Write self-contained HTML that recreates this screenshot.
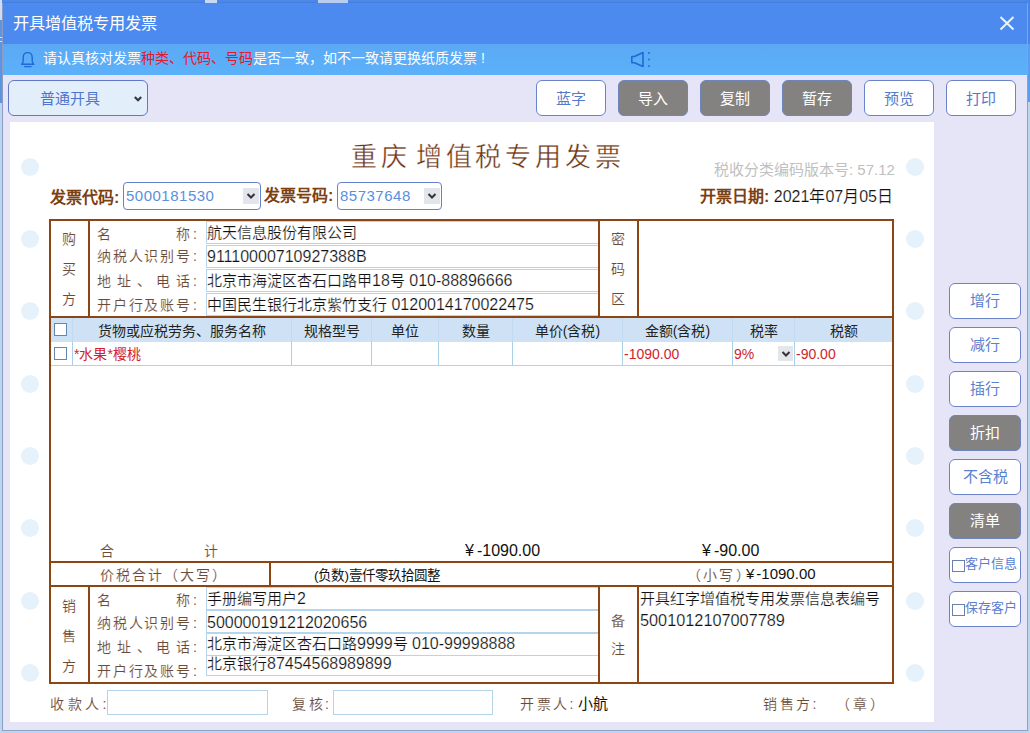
<!DOCTYPE html>
<html lang="zh-CN">
<head>
<meta charset="utf-8">
<style>
*{box-sizing:border-box;margin:0;padding:0}
html,body{width:1030px;height:733px;overflow:hidden}
body{position:relative;background:#bcd6f0;font-family:"Liberation Sans",sans-serif;}
.a{position:absolute;white-space:nowrap}
#win{left:3px;top:3px;width:1024px;height:727px;background:#e5e5f7;}
#title{left:3px;top:3px;width:1024px;height:41px;background:#4d8af0;}
#title .t{left:9.5px;top:9.5px;font-size:16.2px;line-height:20px;color:#fff}
#notice{left:3px;top:44px;width:1024px;height:31px;background:linear-gradient(#5ba9f5,#5bb1f9);}
#notice .t{left:40px;top:5px;font-size:14px;line-height:18px;color:#fff}
.red{color:#e31a2a}
.btn{position:absolute;width:70px;height:36px;border:1.5px solid #6b84c9;border-radius:6px;background:#fff;color:#5679c8;font-size:15px;line-height:35px;text-align:center;}
.btn.g{background:#838280;color:#fff;border-color:#6c86bd}
.rbtn{position:absolute;left:949px;width:72px;height:36px;border:1.5px solid #6b84c9;border-radius:6px;background:#fff;color:#5a80d0;font-size:15px;line-height:34px;text-align:center;}
.rbtn.g{background:#838280;color:#fff;border-color:#6c86bd}
#paper{left:10px;top:122px;width:924px;height:600px;background:#fff;}
.dot{position:absolute;width:18px;height:18px;border-radius:50%;background:#e5f2fb}
.bl{position:absolute;background:#8c4614}
.lbl{position:absolute;width:93px;display:flex;justify-content:space-between;font-size:14px;line-height:16px;color:#6b4a36;-webkit-text-stroke:0.12px #fff}
.lbl2{position:absolute;font-size:14px;line-height:16px;color:#6b4a36;-webkit-text-stroke:0.12px #fff;white-space:nowrap}
.val{position:absolute;left:206px;width:392px;border:1px solid #b6d4ea;border-right:0;font-size:16px;color:#111;-webkit-text-stroke:0.2px #fff;line-height:20px;white-space:nowrap;overflow:hidden;padding-left:0}
.vch{position:absolute;font-size:14px;line-height:16px;color:#6b4a36;-webkit-text-stroke:0.12px #fff}
.hdr{position:absolute;top:318px;height:24px;background:#cfe2f5;font-size:14px;color:#222;line-height:26px;text-align:center;border-right:1px solid #c2daee}
.cell{position:absolute;top:342px;height:24px;border-right:1px solid #a9d0e8;border-bottom:1px solid #b0d2ea;font-size:14px;line-height:24px;color:#d01e2e;white-space:nowrap}
.c{font-size:15px}
.cb{position:absolute;width:13px;height:12px;border:1px solid #6288b0;background:#fff}
</style>
</head>
<body>
<div class="a" style="left:0;top:0;width:1030px;height:3px;background:#4d88e8"></div>
<div class="a" style="left:0;top:2px;width:1030px;height:1px;background:#4380dd"></div>
<div class="a" style="left:2px;top:3px;width:1px;height:728px;background:#8a9cc4"></div>
<div class="a" style="left:1027px;top:3px;width:1px;height:728px;background:#8ea2c8"></div>
<div class="a" style="left:2px;top:730px;width:1026px;height:1px;background:#8ea2c8"></div>
<div class="a" style="left:0;top:3px;width:2px;height:100px;background:#5b95e2"></div>
<div class="a" style="left:0;top:0;width:2px;height:20px;background:#cfdcf6"></div>
<div class="a" style="left:0;top:37px;width:2px;height:1px;background:#d8e6fa"></div>
<div class="a" style="left:0;top:41px;width:2px;height:1px;background:#d8e6fa"></div>
<div class="a" style="left:1028px;top:0;width:2px;height:44px;background:#4a84e6"></div>
<div class="a" style="left:1028px;top:44px;width:2px;height:58px;background:#5a9cee"></div>
<div id="win" class="a"></div>
<div id="title" class="a"><div class="a t">开具增值税专用发票</div><svg class="a" style="left:996px;top:13px" width="18" height="18" viewBox="0 0 18 18"><path d="M1.5 1 L14.5 13.5 M14.5 1 L1.5 13.5" stroke="#eaf4ff" stroke-width="2" fill="none"/></svg></div>
<div id="notice" class="a"><svg class="a" style="left:17px;top:7px" width="16" height="18" viewBox="0 0 16 18"><path d="M1.6 13.3 C2.9 12.4 3.2 11 3.2 9.5 L3.2 6.5 Q3.2 1.6 7.7 1.6 Q12.2 1.6 12.2 6.5 L12.2 9.5 C12.2 11 12.5 12.4 13.8 13.3 Z" stroke="#1c6bd6" stroke-width="1.4" fill="none" stroke-linejoin="round"/><path d="M4.2 15.6 L11.6 15.6" stroke="#1c6bd6" stroke-width="1.3"/></svg><div class="a t">请认真核对发票<span class="red">种类、代码、号码</span>是否一致，如不一致请更换纸质发票<span style="display:inline-block;width:4px"></span>!</div><svg class="a" style="left:627px;top:7px" width="24" height="18" viewBox="0 0 24 18"><path d="M1.8 5.5 L4.5 5.5 L13 1.5 L13 15.5 L4.5 11.8 L1.8 11.8 Z" stroke="#1c6bd6" stroke-width="1.6" fill="none" stroke-linejoin="round"/><circle cx="19" cy="2" r="0.9" fill="#1c6bd6"/><circle cx="19" cy="8.5" r="0.9" fill="#1c6bd6"/><circle cx="19" cy="15" r="0.9" fill="#1c6bd6"/></svg></div>
<div class="a" style="left:205px;top:0;width:12px;height:3px;background:#c9d9f3"></div>
<div class="a" style="left:318px;top:0;width:30px;height:3px;background:#b8cdf0"></div>
<div class="a" style="left:8px;top:80px;width:140px;height:36px;border:1.2px solid #6078c8;border-radius:6px;background:#e3eefb;"></div>
<div class="a" style="left:40px;top:90px;font-size:15px;line-height:18px;color:#4e76cc">普通开具</div>
<svg class="a" style="left:132px;top:94px" width="12" height="10" viewBox="0 0 12 10"><path d="M2.8 3 L6 6.2 L9.2 3" stroke="#38383e" stroke-width="2.2" fill="none"/></svg>
<div class="btn" style="left:536px;top:80px">蓝字</div>
<div class="btn g" style="left:618px;top:80px">导入</div>
<div class="btn g" style="left:700px;top:80px">复制</div>
<div class="btn g" style="left:782px;top:80px">暂存</div>
<div class="btn" style="left:864px;top:80px">预览</div>
<div class="btn" style="left:946px;top:80px">打印</div>
<div class="rbtn" style="top:283px">增行</div>
<div class="rbtn" style="top:327px">减行</div>
<div class="rbtn" style="top:371px">插行</div>
<div class="rbtn g" style="top:415px">折扣</div>
<div class="rbtn" style="top:459px">不含税</div>
<div class="rbtn g" style="top:503px">清单</div>
<div class="rbtn" style="top:547px"></div>
<div class="a" style="left:952px;top:560px;width:13px;height:12px;border:1px solid #6a80aa;background:#fff"></div>
<div class="a" style="left:965px;top:556px;font-size:13px;line-height:16px;color:#5a80d0">客户信息</div>
<div class="rbtn" style="top:591px"></div>
<div class="a" style="left:952px;top:604px;width:13px;height:12px;border:1px solid #6a80aa;background:#fff"></div>
<div class="a" style="left:965px;top:600px;font-size:13px;line-height:16px;color:#5a80d0">保存客户</div>
<div id="paper" class="a"></div>
<div class="dot" style="left:20.5px;top:157.8px"></div>
<div class="dot" style="left:905.5px;top:157.8px"></div>
<div class="dot" style="left:20.5px;top:230.10000000000002px"></div>
<div class="dot" style="left:905.5px;top:230.10000000000002px"></div>
<div class="dot" style="left:20.5px;top:302.4px"></div>
<div class="dot" style="left:905.5px;top:302.4px"></div>
<div class="dot" style="left:20.5px;top:374.7px"></div>
<div class="dot" style="left:905.5px;top:374.7px"></div>
<div class="dot" style="left:20.5px;top:447.0px"></div>
<div class="dot" style="left:905.5px;top:447.0px"></div>
<div class="dot" style="left:20.5px;top:519.3px"></div>
<div class="dot" style="left:905.5px;top:519.3px"></div>
<div class="dot" style="left:20.5px;top:591.5999999999999px"></div>
<div class="dot" style="left:905.5px;top:591.5999999999999px"></div>
<div class="dot" style="left:20.5px;top:663.9px"></div>
<div class="dot" style="left:905.5px;top:663.9px"></div>
<div class="a" style="left:351px;top:139px;font-size:26px;line-height:36px;letter-spacing:3.85px;color:#6e3412;-webkit-text-stroke:0.35px #fff">重庆<span style="display:inline-block;width:5px"></span>增值税专用发票</div>
<div class="a" style="left:714px;top:161px;font-size:15px;line-height:18px;color:#c0c0c0">税收分类编码版本号: 57.12</div>
<div class="a" style="left:700px;top:187px;font-size:16px;line-height:20px;color:#111"><b style="color:#7b3f12">开票日期:</b> <span style="-webkit-text-stroke:0.15px #fff">2021年07月05日</span></div>
<div class="a" style="left:50px;top:188px;font-size:16px;line-height:20px;color:#7b3f12;font-weight:bold">发票代码:</div>
<div class="a" style="left:123px;top:182px;width:138px;height:28px;border:1px solid #6680cc;border-radius:4px;background:#fff"></div>
<div class="a" style="left:126px;top:186px;font-size:15px;letter-spacing:0.5px;line-height:20px;color:#5a90dc">5000181530</div>
<div class="a" style="left:243px;top:188px;width:16px;height:16px;background:#e2e6ec"></div>
<svg class="a" style="left:245px;top:191px" width="12" height="10" viewBox="0 0 12 10"><path d="M2.5 3 L6 6.5 L9.5 3" stroke="#333" stroke-width="2" fill="none"/></svg>
<div class="a" style="left:264px;top:186px;font-size:16px;line-height:20px;color:#7b3f12;font-weight:bold">发票号码:</div>
<div class="a" style="left:337px;top:182px;width:105px;height:28px;border:1px solid #6680cc;border-radius:4px;background:#fff"></div>
<div class="a" style="left:340px;top:186px;font-size:15px;letter-spacing:0.5px;line-height:20px;color:#5a90dc">85737648</div>
<div class="a" style="left:424px;top:188px;width:16px;height:16px;background:#e2e6ec"></div>
<svg class="a" style="left:426px;top:191px" width="12" height="10" viewBox="0 0 12 10"><path d="M2.5 3 L6 6.5 L9.5 3" stroke="#333" stroke-width="2" fill="none"/></svg>
<div class="bl" style="left:49px;top:219px;width:845px;height:2px"></div>
<div class="bl" style="left:49px;top:316px;width:845px;height:2px"></div>
<div class="bl" style="left:49px;top:561px;width:845px;height:2px"></div>
<div class="bl" style="left:49px;top:585px;width:845px;height:2px"></div>
<div class="bl" style="left:49px;top:682px;width:845px;height:2px"></div>
<div class="bl" style="left:49px;top:219px;width:2px;height:465px"></div>
<div class="bl" style="left:892px;top:219px;width:2px;height:465px"></div>
<div class="bl" style="left:88px;top:219px;width:2px;height:99px"></div>
<div class="bl" style="left:598px;top:219px;width:2px;height:99px"></div>
<div class="bl" style="left:637px;top:219px;width:2px;height:99px"></div>
<div class="bl" style="left:269px;top:561px;width:2px;height:26px"></div>
<div class="bl" style="left:88px;top:585px;width:2px;height:99px"></div>
<div class="bl" style="left:598px;top:585px;width:2px;height:99px"></div>
<div class="bl" style="left:637px;top:585px;width:2px;height:99px"></div>
<div class="vch" style="left:62px;top:231px">购</div>
<div class="vch" style="left:62px;top:261px">买</div>
<div class="vch" style="left:62px;top:291px">方</div>
<div class="lbl" style="left:97px;top:226px"><span>名</span><span>称</span></div>
<div class="lbl2" style="left:193px;top:226px">:</div>
<div class="lbl" style="left:97px;top:248px"><span>纳</span><span>税</span><span>人</span><span>识</span><span>别</span><span>号</span></div>
<div class="lbl2" style="left:193px;top:248px">:</div>
<div class="lbl" style="left:97px;top:273px"><span>地</span><span>址</span><span>、</span><span>电</span><span>话</span></div>
<div class="lbl2" style="left:193px;top:273px">:</div>
<div class="lbl" style="left:97px;top:297px"><span>开</span><span>户</span><span>行</span><span>及</span><span>账</span><span>号</span></div>
<div class="lbl2" style="left:193px;top:297px">:</div>
<div class="val" style="top:221px;height:23px;padding-top:1px"><span class="c">航天信息股份有限公司</span></div>
<div class="val" style="top:245px;height:23px;padding-top:1px">91110000710927388B</div>
<div class="val" style="top:269px;height:23px;padding-top:1px"><span class="c">北京市海淀区杏石口路甲</span>18<span class="c">号</span> 010-88896666</div>
<div class="val" style="top:293px;height:23px;padding-top:1px"><span class="c">中国民生银行北京紫竹支行</span> 0120014170022475</div>
<div class="vch" style="left:611px;top:231px">密</div>
<div class="vch" style="left:611px;top:261px">码</div>
<div class="vch" style="left:611px;top:291px">区</div>
<div class="hdr" style="left:51px;width:22px"></div>
<div class="hdr" style="left:73px;width:219px">货物或应税劳务、服务名称</div>
<div class="hdr" style="left:292px;width:80px">规格型号</div>
<div class="hdr" style="left:372px;width:67px">单位</div>
<div class="hdr" style="left:439px;width:74px">数量</div>
<div class="hdr" style="left:513px;width:110px">单价(含税)</div>
<div class="hdr" style="left:623px;width:110px">金额(含税)</div>
<div class="hdr" style="left:733px;width:62px">税率</div>
<div class="hdr" style="left:795px;width:97px;border-right:0">税额</div>
<div class="cb" style="left:54px;top:323px;height:13px"></div>
<div class="cell" style="left:51px;width:22px;padding-left:1px"></div>
<div class="cell" style="left:73px;width:219px;padding-left:1px">*水果*樱桃</div>
<div class="cell" style="left:292px;width:80px;padding-left:1px"></div>
<div class="cell" style="left:372px;width:67px;padding-left:1px"></div>
<div class="cell" style="left:439px;width:74px;padding-left:1px"></div>
<div class="cell" style="left:513px;width:110px;padding-left:1px"></div>
<div class="cell" style="left:623px;width:110px;padding-left:1px">-1090.00</div>
<div class="cell" style="left:733px;width:62px;padding-left:1px">9%</div>
<div class="cell" style="left:795px;width:97px;padding-left:1px;border-right:0">-90.00</div>
<div class="cb" style="left:54px;top:347px;height:13px"></div>
<div class="a" style="left:778px;top:346px;width:15px;height:15px;background:#e3e6ea"></div>
<svg class="a" style="left:779.5px;top:349px" width="12" height="10" viewBox="0 0 12 10"><path d="M2.5 3 L6 6.5 L9.5 3" stroke="#333" stroke-width="2" fill="none"/></svg>
<div class="vch" style="left:100px;top:543px">合</div>
<div class="vch" style="left:204px;top:543px">计</div>
<div class="a" style="left:465px;top:541px;font-size:16px;line-height:20px;color:#111">¥<span style="margin-left:3px">-1090.00</span></div>
<div class="a" style="left:702px;top:541px;font-size:16px;line-height:20px;color:#111">¥<span style="margin-left:3px">-90.00</span></div>
<div class="lbl2" style="left:100px;top:567px;letter-spacing:2px">价税合计（大写）</div>
<div class="a" style="left:314px;top:566px;font-size:13.5px;line-height:20px;color:#111">(负数)壹仟零玖拾圆整</div>
<div class="lbl2" style="left:687px;top:567px;letter-spacing:2.2px">（小写）</div>
<div class="a" style="left:746px;top:564px;font-size:15px;line-height:20px;color:#111">¥<span style="margin-left:2px">-1090.00</span></div>
<div class="vch" style="left:62px;top:598px">销</div>
<div class="vch" style="left:62px;top:628px">售</div>
<div class="vch" style="left:62px;top:658px">方</div>
<div class="lbl" style="left:97px;top:592px"><span>名</span><span>称</span></div>
<div class="lbl2" style="left:193px;top:592px">:</div>
<div class="lbl" style="left:97px;top:615px"><span>纳</span><span>税</span><span>人</span><span>识</span><span>别</span><span>号</span></div>
<div class="lbl2" style="left:193px;top:615px">:</div>
<div class="lbl" style="left:97px;top:639px"><span>地</span><span>址</span><span>、</span><span>电</span><span>话</span></div>
<div class="lbl2" style="left:193px;top:639px">:</div>
<div class="lbl" style="left:97px;top:663px"><span>开</span><span>户</span><span>行</span><span>及</span><span>账</span><span>号</span></div>
<div class="lbl2" style="left:193px;top:663px">:</div>
<div class="val" style="top:587px;height:23px;line-height:20px"><div style="position:relative;top:1px"><span class="c">手册编写用户</span>2</div></div>
<div class="val" style="top:610px;height:23px;line-height:20px"><div style="position:relative;top:2px">500000191212020656</div></div>
<div class="val" style="top:633px;height:23px;line-height:20px"><div style="position:relative;top:0px"><span class="c">北京市海淀区杏石口路</span>9999<span class="c">号</span> 010-99998888</div></div>
<div class="val" style="top:655px;height:21px;line-height:18px"><div style="position:relative;top:-1px"><span class="c">北京银行</span>87454568989899</div></div>
<div class="vch" style="left:611px;top:613px">备</div>
<div class="vch" style="left:611px;top:641px">注</div>
<div class="a" style="left:640px;top:589px;font-size:15px;line-height:20px;color:#111;-webkit-text-stroke:0.2px #fff">开具红字增值税专用发票信息表编号</div>
<div class="a" style="left:640px;top:610px;font-size:16.3px;line-height:20px;color:#111;-webkit-text-stroke:0.2px #fff">5001012107007789</div>
<div class="lbl2" style="left:50px;top:696px;letter-spacing:3.5px">收款人:</div>
<div class="a" style="left:107px;top:690px;width:161px;height:25px;border:1px solid #b4d4e8;background:#fff"></div>
<div class="lbl2" style="left:292px;top:696px;letter-spacing:2.5px">复核:</div>
<div class="a" style="left:333px;top:690px;width:160px;height:25px;border:1px solid #b4d4e8;background:#fff"></div>
<div class="lbl2" style="left:520px;top:696px;letter-spacing:2.5px">开票人:</div>
<div class="a" style="left:578px;top:694px;font-size:15px;line-height:20px;color:#111">小航</div>
<div class="lbl2" style="left:763px;top:696px;letter-spacing:2.5px">销售方:</div>
<div class="lbl2" style="left:836px;top:696px;letter-spacing:3px">（章）</div>
</body>
</html>
